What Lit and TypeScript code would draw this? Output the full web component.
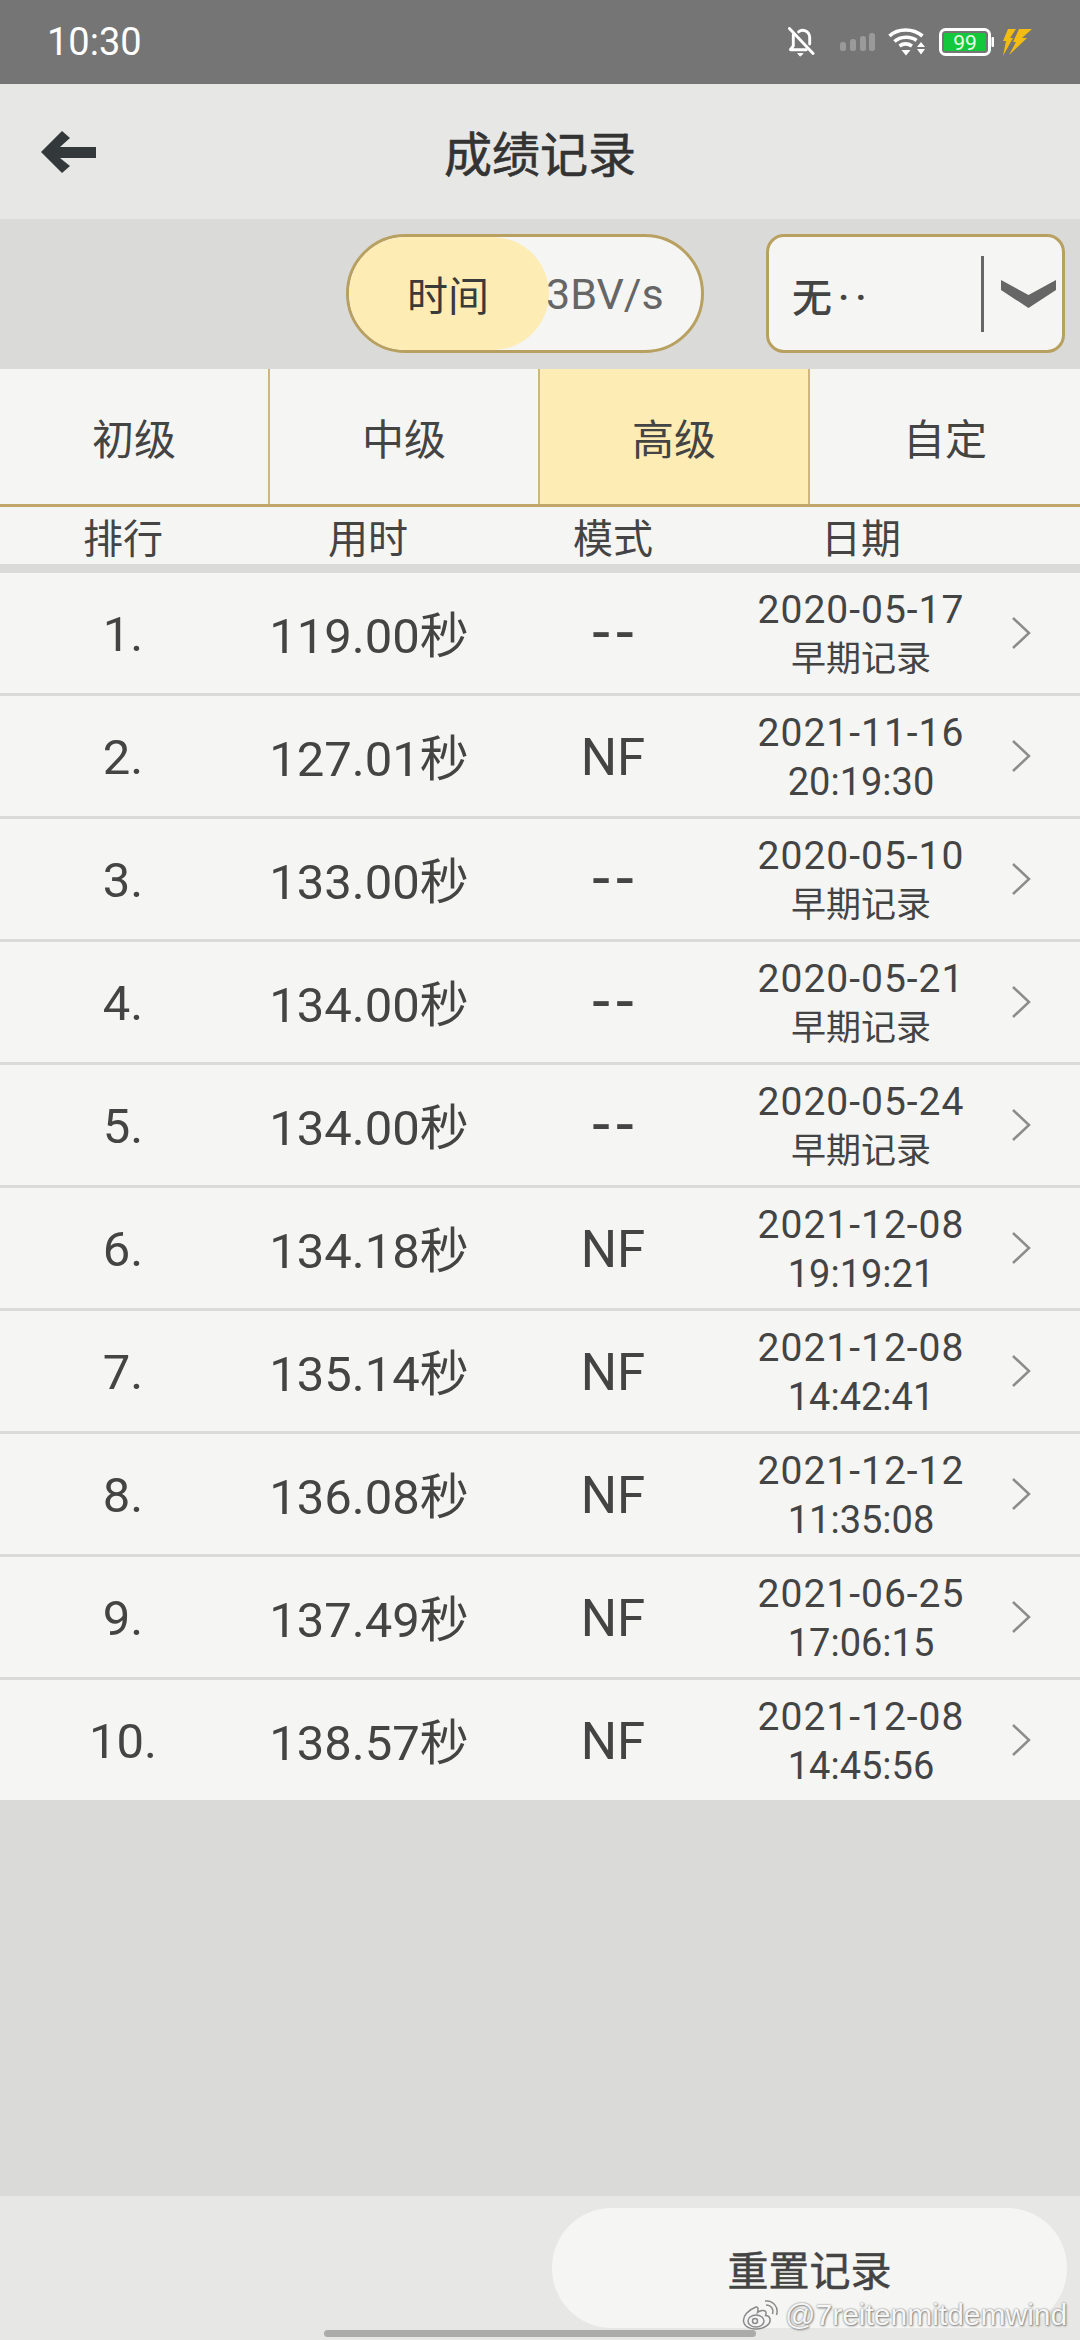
import { LitElement, html, css, svg } from "lit";
import { customElement } from "lit/decorators.js";

const rows = [
  ["1.", "119.00", "--", "2020-05-17", "早期记录"],
  ["2.", "127.01", "NF", "2021-11-16", "20:19:30"],
  ["3.", "133.00", "--", "2020-05-10", "早期记录"],
  ["4.", "134.00", "--", "2020-05-21", "早期记录"],
  ["5.", "134.00", "--", "2020-05-24", "早期记录"],
  ["6.", "134.18", "NF", "2021-12-08", "19:19:21"],
  ["7.", "135.14", "NF", "2021-12-08", "14:42:41"],
  ["8.", "136.08", "NF", "2021-12-12", "11:35:08"],
  ["9.", "137.49", "NF", "2021-06-25", "17:06:15"],
  ["10.", "138.57", "NF", "2021-12-08", "14:45:56"],
];

@customElement("app-root")
export class AppRoot extends LitElement {
  static styles = css`
    :host {
      display: flex;
      flex-direction: column;
      position: relative;
      width: 1080px;
      height: 2340px;
      overflow: hidden;
      background: #dadad8;
      font-family: Roboto, "Noto Sans CJK SC", sans-serif;
      color: #444;
    }
    .status {
      height: 84px;
      background: #757575;
      display: flex;
      align-items: center;
      padding: 0 48px 0 47px;
      color: #fff;
      font-size: 38px;
      flex: none;
    }
    .clock { flex: 1; }
    .status svg { display: block; flex: none; }
    .s-icons { display: flex; align-items: center; }
    .bell { margin-right: 25px; }
    .signal { margin-right: 12px; }
    .wifi { margin-right: 13px; }
    .bolt { margin-left: 8px; }
    .header {
      height: 135px;
      background: #e7e7e5;
      display: flex;
      align-items: center;
      justify-content: center;
      position: relative;
      flex: none;
    }
    .back { position: absolute; left: 41px; top: 47px; }
    .title { font-size: 48px; font-weight: 400; color: #333; margin-bottom: 2px; -webkit-text-stroke: 0.6px #333; }
    .toolbar {
      height: 150px;
      display: flex;
      align-items: flex-start;
      padding: 15px 15px 0 346px;
      box-sizing: border-box;
      flex: none;
    }
    .toggle {
      width: 358px;
      height: 119px;
      box-sizing: border-box;
      border: 3px solid #b8a060;
      border-radius: 60px;
      background: #f5f5f3;
      display: flex;
      align-items: center;
      overflow: hidden;
      margin-right: 62px;
    }
    .seg-on {
      width: 200px;
      height: 100%;
      flex: none;
      border-radius: 58px;
      background: #feecb5;
      display: flex;
      align-items: center;
      justify-content: center;
      color: #3a3a3a;
      font-size: 41px;
      padding: 0 2px 2px 0;
      box-sizing: border-box;
    }
    .seg-off {
      margin-left: -3px;
      color: #666;
      font-size: 43px;
      position: relative;
    }
    .select {
      width: 299px;
      height: 119px;
      box-sizing: border-box;
      border: 3px solid #b8a060;
      border-radius: 18px;
      background: #f5f5f3;
      display: flex;
      align-items: center;
      padding-left: 23px;
    }
    .sel-text { font-size: 40px; width: 189px; flex: none; color: #444; padding-top: 2px; letter-spacing: 6px; font-weight: 500; }
    .sel-bar { width: 3px; height: 76px; background: #666; flex: none; margin-right: 17px; }
    .tabs {
      height: 135px;
      display: grid;
      grid-template-columns: 270px 270px 270px 270px;
      background: #f5f5f3;
      border-bottom: 3px solid #c0a668;
      flex: none;
    }
    .tab {
      display: flex;
      align-items: center;
      justify-content: center;
      font-size: 42px;
      color: #444;
      border-right: 2px solid #cdb877;
      box-sizing: border-box;
    }
    .tab:last-child { border-right: none; }
    .tab.on { background: #feecb5; }
    .thead {
      height: 57px;
      background: #f5f5f3;
      display: grid;
      grid-template-columns: 246px 244px 246px 250px 1fr;
      align-items: center;
      text-align: center;
      font-size: 40px;
      color: #444;
      flex: none;
    }
    .list { margin-top: 9px; flex: none; }
    .row {
      height: 120px;
      background: #f5f5f3;
      display: grid;
      grid-template-columns: 246px 244px 246px 250px 1fr;
      align-items: center;
      text-align: center;
      font-size: 49px;
      color: #444;
      margin-bottom: 3px;
    }
    .row:last-child { margin-bottom: 0; }
    .rank { padding-top: 2px; }
    .time { padding: 0 0 3px 2px; }
    .date { display: flex; flex-direction: column; align-items: center; padding-top: 4px; }
    .d1 { font-size: 39px; letter-spacing: 1px; line-height: 49px; white-space: nowrap; }
    .d2 { font-size: 38px; line-height: 49px; white-space: nowrap; }
    .d2.cjk { font-size: 35px; }
    .mode { font-size: 51px; padding-top: 2px; }
    .mode.dash { font-size: 64px; letter-spacing: 6px; margin-right: -6px; line-height: 60px; padding-top: 0; }
    .chev { display: flex; padding-left: 25px; }
    .fill { flex: 1; }
    .footer {
      height: 144px;
      background: #e7e7e5;
      flex: none;
      display: flex;
      justify-content: flex-end;
      padding: 12px 13px 0 0;
      box-sizing: border-box;
    }
    .reset {
      width: 515px;
      height: 120px;
      border-radius: 60px;
      background: #f5f5f3;
      display: flex;
      align-items: center;
      justify-content: center;
      font-size: 41px;
      color: #444;
      -webkit-text-stroke: 0.5px #444;
    }
    .watermark {
      position: absolute;
      left: 742px;
      top: 2298px;
      display: flex;
      align-items: center;
      gap: 7px;
      font-family: "Liberation Sans", Arial, sans-serif;
      font-size: 30px;
      color: #f6f6f6;
      text-shadow: 0 0 2px #777, 1px 1px 2px #888;
      white-space: nowrap;
    }
    .homebar {
      position: absolute;
      left: 324px;
      top: 2330px;
      width: 432px;
      height: 7px;
      border-radius: 4px;
      background: #ababa9;
    }
  `;

  private bell() {
    return html`<svg class="bell" width="27" height="30" viewBox="0 0 28 30" fill="none" stroke="#fff" stroke-width="3" stroke-linecap="round" stroke-linejoin="round">
      <path d="M11 4.5 C15 1 22 3.5 22.5 10 V17" />
      <path d="M5.5 7.5 V19 L2.5 23 H19" />
      <path d="M1.5 1 L26 27" />
      <path d="M10.5 27 H15.5 L13 29.5 Z" fill="#fff" stroke-width="1" />
    </svg>`;
  }
  private signal() {
    return html`<svg class="signal" width="36" height="18" viewBox="0 0 36 18" fill="#9a9a9a">
      <rect x="0" y="9" width="6" height="9" rx="2.5" />
      <rect x="10" y="6" width="6" height="12" rx="2.5" />
      <rect x="20" y="3" width="6" height="15" rx="2.5" />
      <rect x="29" y="0" width="6" height="18" rx="2.5" />
    </svg>`;
  }
  private wifi() {
    return html`<svg class="wifi" width="38" height="28" viewBox="0 0 38 28" fill="none" stroke="#fff" stroke-width="3.6">
      <path d="M1.5 8 C10 0 25 0 34.5 8" />
      <path d="M6.5 13.5 C12.5 8 23 8 28.5 12.5" />
      <path d="M11.5 18 C15 15.5 20 15.5 24 18" />
      <path d="M13.5 22 H22.5 L18 27.5 Z" fill="#fff" stroke="none" />
      <path d="M29 19 H37 L33 14 Z M29 21 H37 L33 26.5 Z" fill="#fff" stroke="none" />
    </svg>`;
  }
  private battery() {
    return html`<svg width="55" height="28" viewBox="0 0 55 28">
      <rect x="1.5" y="1.5" width="49" height="25" rx="5" fill="none" stroke="#fff" stroke-width="3" />
      <rect x="5" y="5" width="42" height="18" rx="1" fill="#14c83c" />
      <rect x="52.5" y="9" width="2.5" height="10" rx="1" fill="#fff" />
      <text x="26" y="22" text-anchor="middle" font-family="Roboto, sans-serif" font-size="21" fill="#e8ffe8">99</text>
    </svg>`;
  }
  private bolt() {
    return html`<svg class="bolt" width="30" height="27" viewBox="0 0 30 27" fill="#f2bc12">
      <path d="M6 0 H14 L8 9 H11 L1 27 L4 12 H1 Z" />
      <path d="M17 0 H30 L20 9 H25 L7 26 L14 13 H11 Z" />
    </svg>`;
  }

  private chevron() {
    return svg`<svg width="20" height="32" viewBox="0 0 20 32" fill="none" stroke="#8c8c8c" stroke-width="2.5"><path d="M2 1 L18 16 L2 31" /></svg>`;
  }

  render() {
    return html`
      <div class="status">
        <div class="clock">10:30</div>
        <div class="s-icons">
          ${this.bell()}${this.signal()}${this.wifi()}${this.battery()}${this.bolt()}
        </div>
      </div>
      <div class="header">
        <svg class="back" width="55" height="42" viewBox="0 0 55 42" fill="#33393b">
          <path d="M0 21 L21 0 L29 7 L19 16 H55 V27 H19 L29 35 L21 42 Z" />
        </svg>
        <div class="title">成绩记录</div>
      </div>
      <div class="toolbar">
        <div class="toggle">
          <div class="seg-on">时间</div>
          <div class="seg-off">3BV/s</div>
        </div>
        <div class="select">
          <div class="sel-text">无··</div>
          <div class="sel-bar"></div>
          <svg width="55" height="28" viewBox="0 0 55 28" fill="#666">
            <path d="M0 0 L27.5 15 L55 0 V10 L27.5 28 L0 10 Z" />
          </svg>
        </div>
      </div>
      <div class="tabs">
        <div class="tab">初级</div>
        <div class="tab">中级</div>
        <div class="tab on">高级</div>
        <div class="tab">自定</div>
      </div>
      <div class="thead">
        <div>排行</div><div>用时</div><div>模式</div><div>日期</div><div></div>
      </div>
      <div class="list">
        ${rows.map(
          (r) => html`<div class="row">
            <div class="rank">${r[0]}</div>
            <div class="time">${r[1]}秒</div>
            <div class="mode ${r[2] === "--" ? "dash" : ""}">${r[2]}</div>
            <div class="date">
              <div class="d1">${r[3]}</div>
              <div class="d2 ${r[4].includes(":") ? "" : "cjk"}">${r[4]}</div>
            </div>
            <div class="chev">${this.chevron()}</div>
          </div>`
        )}
      </div>
      <div class="fill"></div>
      <div class="footer"><div class="reset">重置记录</div></div>
      <div class="homebar"></div>
      <div class="watermark">
        <svg width="36" height="30" viewBox="0 0 36 30" fill="none" stroke="#8a8a8a" stroke-width="1.5">
          <path d="M14 7 C6 10 1 16 1.5 21 C2 27 9 29.5 15 29 C23 28.5 29 24 28 19 C27.5 16.5 25 15.5 23.5 15.5 C25 12 23.5 10 20 10.5 C18 10.8 16 12 15.5 12.5 C16.5 8 16 6.5 14 7 Z" fill="#f4f4f4" />
          <ellipse cx="14" cy="21" rx="8" ry="6" fill="#f4f4f4" />
          <circle cx="13" cy="21" r="2.5" />
          <path d="M24 5 C29 5 32 9 30.5 14" />
          <path d="M23 1 C31 0 37 7 34.5 15" />
        </svg>
        <span>@7reitenmitdemwind</span>
      </div>
    `;
  }
}
